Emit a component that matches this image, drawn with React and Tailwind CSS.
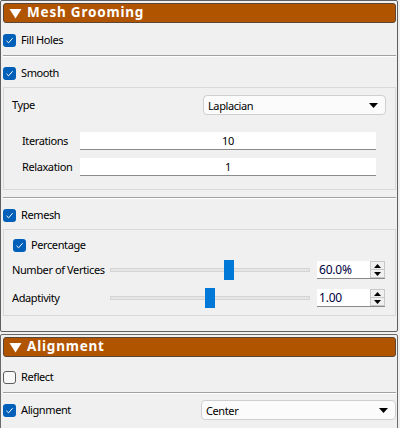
import React from "react";

const font = { fontFamily: '"Noto Sans", "Segoe UI", sans-serif' };

function Check({ checked = true }) {
  if (!checked) {
    return (
      <div className="w-[13px] h-[13px] rounded-[3px] border border-[#5d5d5d] bg-[#f7f7f7] shrink-0" />
    );
  }
  return (
    <div className="w-[13px] h-[13px] rounded-[3px] bg-[#005fb8] shrink-0 flex items-center justify-center">
      <svg width="9" height="9" viewBox="0 0 9 9">
        <path d="M1.5 4.8 L3.6 6.8 L7.6 2.2" fill="none" stroke="#ffffff" strokeWidth="1" />
      </svg>
    </div>
  );
}

function Header({ title }) {
  return (
    <div className="h-[20px] flex items-center rounded-[3px] border border-[#5b4636] bg-[#b15400] pl-[5px]">
      <svg width="13" height="11" viewBox="0 0 13 11" className="shrink-0">
        <path d="M0.5 1 L12.5 1 L6.5 10.5 Z" fill="#ffffff" />
      </svg>
      <span className="ml-[5px] text-[13.5px] font-bold text-white leading-none tracking-[0.8px]">{title}</span>
    </div>
  );
}

function Sep() {
  return (
    <div className="w-full">
      <div className="h-[1px] bg-[#a0a0a0]" />
      <div className="h-[1px] bg-[#ffffff]" />
    </div>
  );
}

function Dropdown({ value, className }) {
  return (
    <div className={"h-[20px] rounded-[4px] border border-[#cfcfcf] bg-[#fbfbfb] flex items-center justify-between pl-[4px] pr-[7px] " + className}>
      <span className="leading-none">{value}</span>
      <svg width="9" height="5" viewBox="0 0 9 5">
        <path d="M0 0 L9 0 L4.5 5 Z" fill="#000000" />
      </svg>
    </div>
  );
}

function NumInput({ value }) {
  return (
    <div className="w-[296px] h-[18px] bg-white border-b border-[#8a8a8a] flex items-center justify-center">
      <span className="leading-none">{value}</span>
    </div>
  );
}

function Slider({ frac }) {
  return (
    <div className="relative w-[200px] h-[20px] flex items-center">
      <div className="w-full h-[4px] bg-[#e6e6e6] border border-[#d4d4d4]" />
      <div
        className="absolute top-0 w-[10px] h-[20px] bg-[#0078d7]"
        style={{ left: `${frac * 190}px` }}
      />
    </div>
  );
}

function Spin({ value }) {
  return (
    <div className="w-[68px] h-[18px] bg-white border-b border-[#8a8a8a] flex items-stretch">
      <span className="flex-1 text-[12px] tracking-[-0.2px] leading-none flex items-center pl-[2px] text-[#000040]">{value}</span>
      <div className="w-[15px] flex flex-col border border-[#c8c8c8] bg-[#f0f0f0]">
        <div className="flex-1 flex items-center justify-center border-b border-[#c8c8c8]">
          <svg width="7" height="4" viewBox="0 0 7 4"><path d="M0 4 L7 4 L3.5 0 Z" fill="#000" /></svg>
        </div>
        <div className="flex-1 flex items-center justify-center">
          <svg width="7" height="4" viewBox="0 0 7 4"><path d="M0 0 L7 0 L3.5 4 Z" fill="#000" /></svg>
        </div>
      </div>
    </div>
  );
}

export default function App() {
  return (
    <div className="w-[400px] h-[428px] overflow-hidden bg-[#f0f0f0] text-black text-[11px] tracking-[-0.4px]" style={font}>
      {/* Panel 1 */}
      <div className="w-[398px] h-[332px] border border-[#5f5f5f] rounded-[2px] pl-[2px] pr-[1px] pt-[2px]">
        <Header title="Mesh Grooming" />
        <div className="h-[32px] flex items-center gap-[5px] pt-[2px]">
          <Check />
          <span>Fill Holes</span>
        </div>
        <Sep />
        <div className="h-[30px] flex items-center gap-[5px] pt-[2px]">
          <Check />
          <span>Smooth</span>
        </div>
        {/* Group 1 */}
        <div className="w-[393px] h-[103px] border border-[#d9d9d9] pl-[8px] pt-[7px]">
          <div className="flex items-center h-[20px]">
            <span className="w-[191px]">Type</span>
            <Dropdown value="Laplacian" className="w-[183px]" />
          </div>
          <div className="mt-[17px] pl-[10px] flex flex-col gap-[8px]">
            <div className="flex items-center">
              <span className="w-[58px]">Iterations</span>
              <NumInput value="10" />
            </div>
            <div className="flex items-center">
              <span className="w-[58px]">Relaxation</span>
              <NumInput value="1" />
            </div>
          </div>
        </div>
        <div className="h-[7px]" />
        <Sep />
        <div className="h-[30px] flex items-center gap-[5px] pt-[2px]">
          <Check />
          <span>Remesh</span>
        </div>
        {/* Group 2 */}
        <div className="w-[393px] h-[87px] border border-[#d9d9d9] pl-[8px] pt-[9px]">
          <div className="flex items-center gap-[5px] h-[13px] pl-[1px]">
            <Check />
            <span>Percentage</span>
          </div>
          <div className="mt-[8px] flex items-center h-[20px]">
            <span className="w-[98px] whitespace-nowrap">Number of Vertices</span>
            <Slider frac={0.6} />
            <div className="ml-[7px]">
              <Spin value="60.0%" />
            </div>
          </div>
          <div className="mt-[8px] flex items-center h-[20px]">
            <span className="w-[98px]">Adaptivity</span>
            <Slider frac={0.5} />
            <div className="ml-[7px]">
              <Spin value="1.00" />
            </div>
          </div>
        </div>
      </div>
      {/* Panel 2 */}
      <div className="mt-[2px] w-[398px] h-[120px] border border-[#6a6a6a] rounded-[2px] pl-[2px] pr-[1px] pt-[2px]">
        <Header title="Alignment" />
        <div className="h-[35px] flex items-center gap-[5px] pt-[5px]">
          <Check checked={false} />
          <span>Reflect</span>
        </div>
        <Sep />
        <div className="h-[32px] flex items-center">
          <div className="flex items-center gap-[5px] w-[198px]">
            <Check />
            <span>Alignment</span>
          </div>
          <Dropdown value="Center" className="w-[195px]" />
        </div>
      </div>
    </div>
  );
}
